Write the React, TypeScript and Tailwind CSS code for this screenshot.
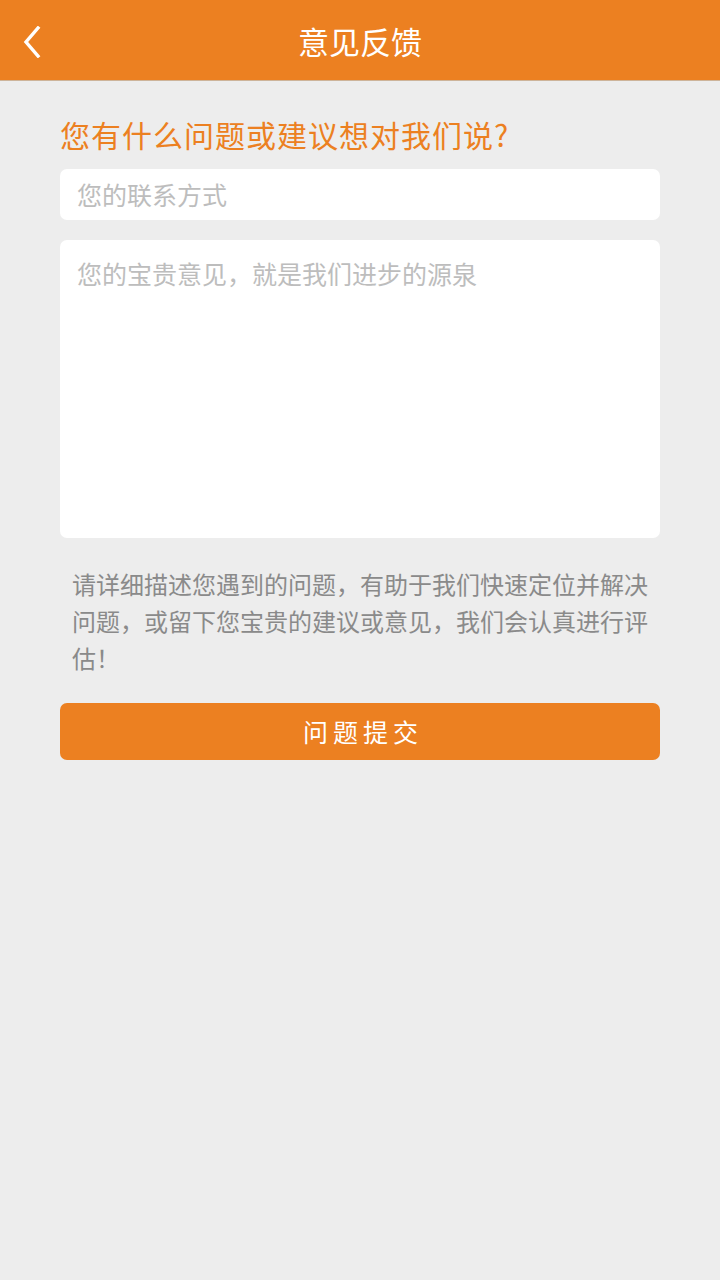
export default function App() {
  const font = { fontFamily: '"Noto Sans CJK SC", "Noto Sans", sans-serif' };
  return (
    <div className="min-h-[1280px] w-[720px] bg-[#ededed]" style={font}>
      <div className="relative flex h-[81px] items-center justify-center border-b border-[#cdb49a] bg-[#ec8021]">
        <button className="absolute left-[20px] top-[24px] flex h-[36px] w-[24px] items-center justify-center">
          <svg width="20" height="32" viewBox="0 0 20 32" fill="none">
            <path d="M16 2 L4 16 L16 30" stroke="white" strokeWidth="3.4" strokeLinecap="square" />
          </svg>
        </button>
        <h1 className="text-[31px] leading-none text-white">意见反馈</h1>
      </div>

      <div className="px-[60px] pt-[33px]">
        <p className="text-[30px] leading-[40px] tracking-[1px] text-[#ec8021]">您有什么问题或建议想对我们说?</p>
        <div className="mt-[15px] flex h-[51px] items-center rounded-[7px] bg-white px-[17px]">
          <span className="text-[25px] text-[#bdbdbd]">您的联系方式</span>
        </div>
        <div className="mt-[20px] h-[298px] rounded-[7px] bg-white px-[17px] pt-[15px]">
          <span className="text-[25px] leading-[36px] text-[#bdbdbd]">您的宝贵意见，就是我们进步的源泉</span>
        </div>
        <p className="mt-[27px] pl-[12px] pr-[6px] text-[24px] leading-[37px] text-[#8a8a8a]">
          请详细描述您遇到的问题，有助于我们快速定位并解决问题，或留下您宝贵的建议或意见，我们会认真进行评估！
        </p>
        <button className="mt-[27px] flex h-[57px] w-full items-center justify-center rounded-[7px] bg-[#ec8021] pl-[6px] text-[25px] tracking-[5px] text-white">
          问题提交
        </button>
      </div>
    </div>
  );
}
